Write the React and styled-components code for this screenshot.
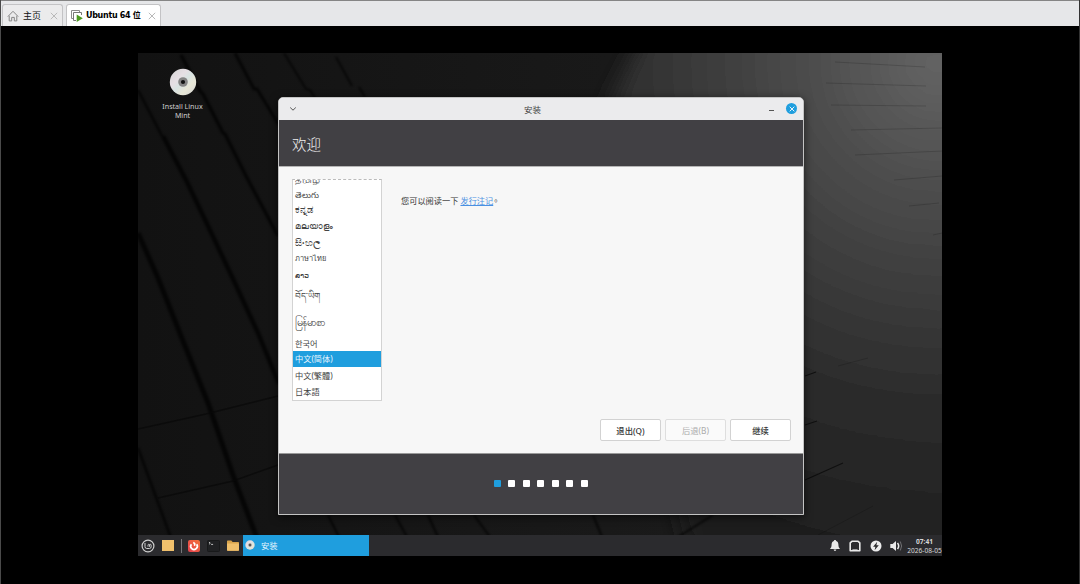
import React from "react";
import styled, { createGlobalStyle, css } from "styled-components";

const GlobalStyle = createGlobalStyle`
  * {
    box-sizing: border-box;
  }
  body {
    margin: 0;
    background: #000;
    font-family: "Noto Sans", "Noto Sans CJK SC", sans-serif;
  }
`;

const languages = [
  { name: "தமிழ்", height: 8, size: 9.6, lang: "ta", clipped: true },
  { name: "తెలుగు", height: 13, size: 8.5, lang: "te" },
  { name: "ಕನ್ನಡ", height: 16, size: 10.2, lang: "kn" },
  { name: "മലയാളം", height: 17, size: 8.8, lang: "ml" },
  { name: "සිංහල", height: 15, size: 10, lang: "si" },
  { name: "ภาษาไทย", height: 17, size: 7.4, lang: "th" },
  { name: "ລາວ", height: 18, size: 7.6, lang: "lo" },
  { name: "བོད་ཡིག", height: 24, size: 8.8, lang: "bo" },
  { name: "မြန်မာစာ", height: 28, size: 10.8, lang: "my" },
  { name: "한국어", height: 15, lang: "ko" },
  { name: "中文(简体)", height: 16, lang: "zh-CN", selected: true },
  { name: "中文(繁體)", height: 17, lang: "zh-TW" },
  { name: "日本語", height: 15, lang: "ja" },
];

const steps = [1, 2, 3, 4, 5, 6, 7];

function HomeIcon() {
  return (
    <svg width="12" height="12" viewBox="0 0 12 12" fill="none" stroke="#858585">
      <path d="M0.8 6.6 6 1.3l5.2 5.3M2.2 5.8v5.1h2.5V7.4h2.6v3.5h2.5V5.8" />
    </svg>
  );
}

function MachineIcon() {
  return (
    <svg width="12" height="12" viewBox="0 0 12 12" fill="none">
      <path d="M2.5 8.5h-2v-8h8v2" stroke="#8a8a8a" />
      <path d="M5 10.5H2.5v-8h8V5" stroke="#777" />
      <path d="M5.7 4.6 11.8 8.3 5.7 12z" fill="#4c9a20" />
    </svg>
  );
}

function CloseIcon() {
  return (
    <svg width="8" height="8" viewBox="0 0 8 8" stroke="#b9b9b9">
      <path d="M0.8 0.8l6.4 6.4M7.2 0.8 0.8 7.2" />
    </svg>
  );
}

function Disc({ size }) {
  return (
    <svg width={size} height={size} viewBox="0 0 28 28">
      <defs>
        <linearGradient id={`disc${size}`} x1="0" y1="0" x2="1" y2="1">
          <stop offset="0" stopColor="#d4d4d4" />
          <stop offset="0.35" stopColor="#e6dfe4" />
          <stop offset="0.5" stopColor="#d9e3e2" />
          <stop offset="0.7" stopColor="#e7e6d6" />
          <stop offset="1" stopColor="#d4d4d4" />
        </linearGradient>
      </defs>
      <circle cx="14" cy="14" r="13.2" fill={`url(#disc${size})`} />
      <circle cx="14" cy="14" r="4.8" fill="#858585" />
      <circle cx="14" cy="14" r="2.1" fill="#111" />
    </svg>
  );
}

function MintIcon() {
  return (
    <svg width="14" height="14" viewBox="0 0 14 14" fill="none" stroke="#cfcfcf">
      <circle cx="7" cy="7" r="5.9" strokeWidth="1.2" />
      <path
        d="M4 4v3.7q0 1.8 1.8 1.8h2.6q1.8 0 1.8-1.8V6.3q0-1-.8-1t-.8 1v1.3M8.6 7.6V6.3q0-1-.8-1t-.8 1v1.3"
        strokeWidth="1"
      />
    </svg>
  );
}

function FirefoxIcon() {
  return (
    <svg width="12" height="12" viewBox="0 0 12 12">
      <defs>
        <linearGradient id="firefox" x1="1" y1="0" x2="0" y2="1">
          <stop offset="0" stopColor="#f2703a" />
          <stop offset="1" stopColor="#e6404e" />
        </linearGradient>
      </defs>
      <rect width="12" height="12" rx="2" fill="url(#firefox)" />
      <path
        d="M3.4 4.2a3.3 3.3 0 1 0 5.3.1M5.2 2.6c1.7.4 2 1.900 1.100 3.100"
        fill="none"
        stroke="#fff"
        strokeWidth="1.7"
      />
    </svg>
  );
}

function TerminalIcon() {
  return (
    <svg width="13" height="12" viewBox="0 0 13 12">
      <rect x="0.5" y="0.5" width="12" height="11" rx="1" fill="#202123" stroke="#18191a" />
      <path d="M2 2.1l1.3 1.1L2 4.3M4.1 4.4h2" fill="none" stroke="#cfcfcf" strokeWidth="0.9" />
    </svg>
  );
}

function FolderIcon() {
  return (
    <svg width="12" height="11" viewBox="0 0 12 11">
      <path d="M0 1.2Q0 .5.7.5h3.6L5.6 2h5.7q.7 0 .7.7V10q0 .8-.8.8H.8Q0 10.8 0 10z" fill="#d9a44c" />
      <path d="M0 3.4h12V10q0 .8-.8.8H.8Q0 10.8 0 10z" fill="#f0c06c" />
    </svg>
  );
}

function BellIcon() {
  return (
    <svg width="12" height="13" viewBox="0 0 12 13" fill="#e9e9e9">
      <path d="M6 1c.7 0 1.1.4 1.1 1 1.6.5 2.3 1.9 2.3 3.6 0 2.3.6 3.3 1.6 4.3H1c1-1 1.6-2 1.6-4.3 0-1.7.7-3.1 2.3-3.6 0-.6.4-1 1.1-1zM4.6 10.6h2.8q-.2 1.4-1.4 1.4t-1.4-1.4z" />
    </svg>
  );
}

function NetworkIcon() {
  return (
    <svg width="12" height="12" viewBox="0 0 12 12" fill="none" stroke="#e9e9e9">
      <path d="M1.2 2.8 2.9 1.3h6.2l1.7 1.5v7.9H1.2z" strokeWidth="1.6" strokeLinejoin="round" />
      <path d="M3.400 9.500h5.200" strokeWidth="1" opacity="0.6" />
    </svg>
  );
}

function PowerIcon() {
  return (
    <svg width="12" height="12" viewBox="0 0 12 12">
      <circle cx="6" cy="6" r="5.5" fill="#ededed" />
      <path d="M7.2 1.8 3.1 6.7h2.3l-.8 3.5 4.2-5H6.4z" fill="#2b2b2d" />
    </svg>
  );
}

function VolumeIcon() {
  return (
    <svg width="13" height="12" viewBox="0 0 13 12" fill="none" stroke="#e9e9e9">
      <path d="M.3 4h2.3L6 1v10L2.6 8H.3z" fill="#e9e9e9" stroke="none" />
      <path d="M7.5 3q2.4 3 0 6" strokeWidth="1.5" />
      <path d="M10.3 1.5q2.6 4.5 0 9" stroke="#77777a" strokeWidth="0.9" />
    </svg>
  );
}

function Wallpaper() {
  return (
    <WallpaperSvg viewBox="0 0 804 503" preserveAspectRatio="none">
      <defs>
        <linearGradient id="base" x1="0" x2="1">
          <stop offset="0" stopColor="#121212" />
          <stop offset="0.5" stopColor="#181818" />
          <stop offset="1" stopColor="#1e1e1e" />
        </linearGradient>
        <radialGradient id="light" gradientUnits="userSpaceOnUse" cx="800" cy="10" r="540">
          <stop offset="0" stopColor="#646464" />
          <stop offset="0.2" stopColor="#505050" />
          <stop offset="0.4" stopColor="#3e3e3e" />
          <stop offset="0.62" stopColor="#2c2c2c" />
          <stop offset="0.85" stopColor="#222" />
          <stop offset="1" stopColor="#191919" />
        </radialGradient>
        <filter id="soft" x="-20%" y="-20%" width="140%" height="140%">
          <feGaussianBlur stdDeviation="10" />
        </filter>
        <filter id="seam">
          <feGaussianBlur stdDeviation="1" />
        </filter>
      </defs>
      <rect width="804" height="503" fill="url(#base)" />
      <path d="M518-40 470 50 500 300 560 540H850V-40z" fill="url(#light)" filter="url(#soft)" />
      <g fill="none" stroke="#040404" strokeWidth="3.5" opacity="0.7" filter="url(#seam)">
        <path d="M0 37 24 83" strokeWidth="2.5" />
        <path d="M25 83l24 46 21 44 26 55 24 52 21 51" strokeWidth="4.5" />
        <path d="M43 2l19 36 3 3 20 39 2 1 21 42 32 60" />
        <path d="M97 0l19 36 3 0 22 36" strokeWidth="3" />
        <path d="M146 0l22 36 4 1 15 24M198 4l16 29M221 34l6 10" strokeWidth="1.8" />
        <path d="M0 180l20 45 25 63 25 62 26 75 23 60" strokeWidth="5" />
        <path d="M0 395l33 90" strokeWidth="2.5" />
        <path d="M190 462l11 22M257 462l12 22M290 462l10 22M336 462l16 22M455 462l9 22M575 462l-35 22" strokeWidth="2" />
      </g>
      <g fill="none" stroke="#090909" strokeWidth="1.5" opacity="0.7">
        <path d="M0 376 68 361 140 343M20 445 95 428 140 412" />
      </g>
      <g fill="none" stroke="#000" strokeWidth="1.2">
        <path d="M667 323l11-4M667 372l12-4M667 427l38-17" opacity="0.6" />
        <path
          d="M697 9l90 5M688 30l100 3M693 52l95 1M713 77l91-2M717 102l87-4M756 127l48-4M771 153l30-3M795 182l9-2M700 313l30-8M680 482l55-29"
          strokeWidth="0.9"
          opacity="0.18"
        />
      </g>
    </WallpaperSvg>
  );
}

export default function App() {
  return (
    <>
      <GlobalStyle />
      <Viewer>
        <TabBar>
          <Tab $width={61}>
            <HomeIcon />
            <TabLabel>主页</TabLabel>
            <CloseIcon />
          </Tab>
          <Tab $width={95} $active>
            <MachineIcon />
            <TabLabel $active>Ubuntu 64 位</TabLabel>
            <CloseIcon />
          </Tab>
        </TabBar>
        <Desktop>
          <Wallpaper />
          <Workspace>
            <DesktopIcon>
              <Disc size={28} />
              <span>Install Linux Mint</span>
            </DesktopIcon>
            <Installer />
          </Workspace>
          <Taskbar />
        </Desktop>
      </Viewer>
    </>
  );
}

function Installer() {
  return (
    <Window>
      <TitleBar>
        <svg width="8" height="6" viewBox="0 0 8 6" fill="none" stroke="#555">
          <path d="M1.2 1.5 4 4.2l2.8-2.7" />
        </svg>
        <Title>安装</Title>
        <Minimize />
        <CloseButton>
          <svg width="6" height="6" viewBox="0 0 6 6" stroke="#fff" strokeWidth="0.9">
            <path d="M.7.7l4.6 4.6M5.3.7.7 5.3" />
          </svg>
        </CloseButton>
      </TitleBar>
      <Header>欢迎</Header>
      <Body>
        <Columns>
          <LanguageList>
            {languages.map((item) => (
              <Language
                key={item.lang}
                lang={item.lang}
                $height={item.height}
                $size={item.size}
                $selected={item.selected}
                $clipped={item.clipped}
              >
                {item.name}
              </Language>
            ))}
          </LanguageList>
          <Notes>
            您可以阅读一下 <NotesLink>发行注记</NotesLink>
            <Period lang="zh-TW">。</Period>
          </Notes>
        </Columns>
        <Actions>
          <Button>退出(Q)</Button>
          <Button disabled>后退(B)</Button>
          <Button>继续</Button>
        </Actions>
      </Body>
      <Footer>
        {steps.map((step) => (
          <Step key={step} $current={step === 1} />
        ))}
      </Footer>
    </Window>
  );
}

function Taskbar() {
  return (
    <Panel>
      <Launchers>
        <MintIcon />
        <ShowDesktop />
        <Separator />
        <FirefoxIcon />
        <TerminalIcon />
        <FolderIcon />
      </Launchers>
      <Task>
        <Disc size={10} />
        安装
      </Task>
      <Tray>
        <BellIcon />
        <NetworkIcon />
        <PowerIcon />
        <VolumeIcon />
      </Tray>
      <Clock>
        <strong>07:41</strong>
        <span>2026-08-05</span>
      </Clock>
    </Panel>
  );
}

const Viewer = styled.div`
  display: flex;
  flex-direction: column;
  width: 1080px;
  height: 584px;
  overflow: hidden;
  background: #000;
  border-left: 1px solid #4a4a4a;
  border-right: 1px solid #333;
`;

const TabBar = styled.div`
  display: flex;
  align-items: flex-end;
  gap: 3px;
  height: 26px;
  padding-left: 1px;
  background: #e6e7e9;
  border-top: 1px solid #858585;
`;

const Tab = styled.div`
  display: flex;
  align-items: center;
  width: ${(props) => props.$width}px;
  height: 22px;
  padding: 0 4px;
  background: ${(props) => (props.$active ? "#fff" : "#ebebec")};
  border: 1px solid #c3c3c5;
  border-bottom: 0;
  border-radius: 3px 3px 0 0;
`;

const TabLabel = styled.span`
  flex: 1;
  padding-left: 4px;
  color: #111;
  font-size: 9px;
  line-height: 20px;
  white-space: nowrap;
  ${(props) =>
    props.$active &&
    css`
      padding-left: 3px;
      color: #000;
      font-family: "DejaVu Sans", "Noto Sans CJK SC", sans-serif;
      font-size: 8px;
      font-weight: 700;
      letter-spacing: -0.3px;
    `}
`;

const Desktop = styled.div`
  position: relative;
  display: flex;
  flex-direction: column;
  width: 804px;
  height: 503px;
  margin: 27px 0 0 137px;
  overflow: hidden;
`;

const WallpaperSvg = styled.svg`
  position: absolute;
  width: 100%;
  height: 100%;
`;

const Workspace = styled.div`
  position: relative;
  flex: 1;
`;

const DesktopIcon = styled.div`
  position: absolute;
  top: 15px;
  left: 18px;
  display: flex;
  flex-direction: column;
  align-items: center;
  gap: 5.5px;
  width: 53px;
  color: #d0d0d0;
  font-size: 7.1px;
  line-height: 9.5px;
  text-align: center;
`;

const Window = styled.div`
  position: absolute;
  top: 44px;
  left: 140px;
  display: flex;
  flex-direction: column;
  width: 526px;
  height: 418px;
  overflow: hidden;
  background: #f7f7f7;
  border: 1px solid #c4c4c4;
  border-radius: 5px 5px 0 0;
  box-shadow: 0 2px 8px rgba(0, 0, 0, 0.6);
`;

const TitleBar = styled.div`
  display: flex;
  align-items: center;
  height: 22px;
  padding: 0 6px 1px 10px;
  background: #ebebed;
`;

const Title = styled.div`
  flex: 1;
  padding-right: 1px;
  color: #3f3f3f;
  font-size: 8.5px;
  text-align: center;
`;

const Minimize = styled.div`
  width: 5px;
  height: 1px;
  margin: 4px 12px 0 0;
  background: #555;
`;

const CloseButton = styled.div`
  display: flex;
  align-items: center;
  justify-content: center;
  width: 11px;
  height: 11px;
  background: #1f9ede;
  border-radius: 50%;
`;

const Header = styled.div`
  height: 46px;
  padding-left: 13px;
  background: #414044;
  color: #efefef;
  font-size: 14.5px;
  font-weight: 300;
  line-height: 48px;
`;

const Body = styled.div`
  display: flex;
  flex: 1;
  flex-direction: column;
  justify-content: space-between;
  padding: 12px 12px 12px 13px;
  border-top: 1px solid #b5b5b5;
  border-bottom: 1px solid #999;
`;

const Columns = styled.div`
  display: flex;
  gap: 19px;
`;

const LanguageList = styled.div`
  width: 90px;
  height: 222px;
  overflow: hidden;
  background: #fff;
  border: 1px solid #d3d3d3;
  border-top: 1px dashed #bbb;
`;

const Language = styled.div`
  display: flex;
  align-items: ${(props) => (props.$clipped ? "flex-end" : "center")};
  height: ${(props) => props.$height}px;
  padding-left: 2px;
  padding-bottom: ${(props) => (props.$clipped ? 2 : 0)}px;
  background: ${(props) => (props.$selected ? "#1f9ede" : "transparent")};
  color: ${(props) => (props.$selected ? "#e9f6ff" : "#444")};
  font-size: ${(props) => props.$size || 8.2}px;
  line-height: 12px;
  white-space: nowrap;
`;

const Notes = styled.p`
  margin: 16px 0 0;
  color: #353535;
  font-size: 8.2px;
  line-height: 11px;
`;

const NotesLink = styled.a`
  color: #4a90e2;
  text-decoration: underline;
`;

const Period = styled.span`
  margin-left: -1.5px;
  font-family: "Noto Sans CJK TC", sans-serif;
`;

const Actions = styled.div`
  display: flex;
  justify-content: flex-end;
  gap: 4px;
`;

const Button = styled.button`
  width: 61px;
  height: 22px;
  padding: 0;
  background: #fff;
  border: 1px solid #d2d2d2;
  border-radius: 2px;
  color: #333;
  font-family: inherit;
  font-size: 8.3px;
  font-weight: 500;

  &:disabled {
    background: #fafafa;
    border-color: #dedede;
    color: #aaa;
    font-weight: 400;
  }
`;

const Footer = styled.div`
  display: flex;
  align-items: center;
  justify-content: center;
  gap: 7.5px;
  height: 60px;
  padding: 0 1px 1px 0;
  background: #414044;
`;

const Step = styled.span`
  width: 7px;
  height: 7px;
  border-radius: 1px;
  background: ${(props) => (props.$current ? "#1f9ede" : "#fff")};
`;

const Panel = styled.div`
  position: relative;
  display: flex;
  align-items: center;
  height: 21px;
  background: #2b2b2e;
`;

const Launchers = styled.div`
  display: flex;
  align-items: center;
  justify-content: space-between;
  width: 105px;
  padding: 0 4px 0 3px;
`;

const ShowDesktop = styled.span`
  width: 12px;
  height: 11px;
  background: #f0c06c;
`;

const Separator = styled.span`
  width: 1px;
  height: 14px;
  background: #77777a;
`;

const Task = styled.div`
  display: flex;
  align-items: center;
  gap: 6px;
  width: 126px;
  height: 21px;
  padding: 0 0 1px 2px;
  background: #1f9ede;
  color: #e9f6ff;
  font-size: 8.3px;
`;

const Tray = styled.div`
  display: flex;
  align-items: center;
  gap: 8.5px;
  margin: 0 1px 0 auto;
`;

const Clock = styled.div`
  display: flex;
  flex-direction: column;
  align-items: center;
  width: 38px;
  padding-left: 3px;
  color: #d8d8d8;
  font-size: 6.6px;
  line-height: 9px;
`;
